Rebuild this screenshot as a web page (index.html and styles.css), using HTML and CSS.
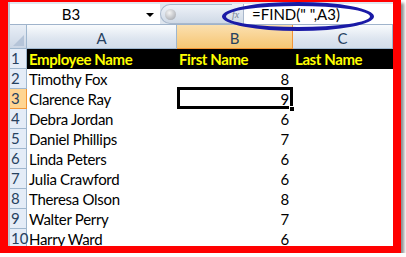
FILE: index.html
```html
<!DOCTYPE html>
<html lang="en">
<head>
  <meta charset="UTF-8">
  <title>FIND function</title>
  <link rel="stylesheet" href="styles.css">
</head>
<body>
  <div class="frame">
    <div class="sheet">
      <!-- Formula bar -->
      <div class="formula-bar">
        <div class="name-box">
          <span class="cell-ref">B3</span>
          <span class="drop-arrow"></span>
        </div>
        <div class="splitter"><span class="knob"></span></div>
        <div class="fx">fx</div>
        <div class="formula">=FIND(" ",A3)</div>
      </div>

      <!-- Grid -->
      <div class="grid">
        <div class="corner"><span class="corner-tri"></span></div>
        <div class="col-head">A</div>
        <div class="col-head active">B</div>
        <div class="col-head">C</div>

        <div class="row-head">1</div>
        <div class="cell title">Employee Name</div>
        <div class="cell title">First Name</div>
        <div class="cell title">Last Name</div>

        <div class="row-head">2</div>
        <div class="cell">Timothy Fox</div>
        <div class="cell num">8</div>
        <div class="cell"></div>

        <div class="row-head active">3</div>
        <div class="cell">Clarence Ray</div>
        <div class="cell num selected">9<span class="handle"></span></div>
        <div class="cell"></div>

        <div class="row-head">4</div>
        <div class="cell">Debra Jordan</div>
        <div class="cell num">6</div>
        <div class="cell"></div>

        <div class="row-head">5</div>
        <div class="cell">Daniel Phillips</div>
        <div class="cell num">7</div>
        <div class="cell"></div>

        <div class="row-head">6</div>
        <div class="cell">Linda Peters</div>
        <div class="cell num">6</div>
        <div class="cell"></div>

        <div class="row-head">7</div>
        <div class="cell">Julia Crawford</div>
        <div class="cell num">6</div>
        <div class="cell"></div>

        <div class="row-head">8</div>
        <div class="cell">Theresa Olson</div>
        <div class="cell num">8</div>
        <div class="cell"></div>

        <div class="row-head">9</div>
        <div class="cell">Walter Perry</div>
        <div class="cell num">7</div>
        <div class="cell"></div>

        <div class="row-head">10</div>
        <div class="cell">Harry Ward</div>
        <div class="cell num">6</div>
        <div class="cell"></div>
      </div>
    </div>

    <!-- annotation circled around the formula -->
    <div class="callout"></div>
  </div>
</body>
</html>
```

FILE: styles.css
```css
* {
  box-sizing: border-box;
  margin: 0;
  padding: 0;
}
body {
  background: #fff;
  font-family: Lato, "Open Sans", sans-serif;
  font-size: 14px;
  color: #000;
}
.frame {
  position: relative;
  width: 401px;
  height: 253px;
  border-style: solid;
  border-color: #ff0000;
  border-width: 2px 8px 7px 8px;
  box-shadow: 3px 3px 3px rgba(0, 0, 0, 0.45);
}
.sheet {
  height: 100%;
  overflow: hidden;
  border-left: 2px solid #bcc6d3;
}

/* Formula bar */
.formula-bar {
  display: flex;
  height: 23px;
  background: #dfe6ef;
  border-bottom: 1px solid #9fb3cb;
  padding-top: 2px;
}
.name-box {
  position: relative;
  width: 150px;
  background: #fff;
  display: flex;
  align-items: center;
  justify-content: center;
  font-size: 15px;
}
.cell-ref {
  margin-right: 28px;
}
.drop-arrow {
  position: absolute;
  right: 6px;
  top: 9px;
  border-left: 4px solid transparent;
  border-right: 4px solid transparent;
  border-top: 4px solid #000;
}
.splitter {
  width: 72px;
  background: linear-gradient(#eef2f8, #cfd9e6);
  border: 1px solid #a9b8cc;
  border-right: none;
  border-radius: 10px 0 0 10px;
  display: flex;
  align-items: center;
  padding-left: 4px;
}
.knob {
  width: 11px;
  height: 11px;
  border-radius: 50%;
  background: radial-gradient(circle at 40% 35%, #f4f4f4, #9a9ea6);
}
.fx {
  width: 11px;
  font-family: "Liberation Serif", serif;
  font-style: italic;
  font-size: 10px;
  color: #7b8696;
  display: flex;
  align-items: center;
  background: linear-gradient(#eef2f8, #cfd9e6);
}
.formula {
  flex: 1;
  background: #fff;
  border-left: 1px solid #a9b8cc;
  padding-left: 8px;
  display: flex;
  align-items: center;
  font-size: 15px;
}

/* Grid */
.grid {
  display: grid;
  grid-template-columns: 17px 150px 116px 100px;
  grid-template-rows: 24px repeat(10, 20px);
}
.corner {
  position: relative;
  background: linear-gradient(#e8eef6, #cbd6e5);
  border-right: 1px solid #9eb6ce;
  border-bottom: 1px solid #9eb6ce;
}
.corner-tri {
  position: absolute;
  right: 2px;
  bottom: 2px;
  border-left: 11px solid transparent;
  border-bottom: 11px solid #b5c4d8;
}
.col-head {
  background: linear-gradient(#f9fbfd, #dde5ef 60%, #d3ddea);
  border-right: 1px solid #9eb6ce;
  border-bottom: 1px solid #9eb6ce;
  color: #27415f;
  display: flex;
  align-items: center;
  justify-content: center;
  padding-top: 2px;
  font-size: 15px;
}
.col-head.active {
  background: linear-gradient(#fbe0b0, #f8d08b 60%, #f5c774);
  border-color: #f29536;
}
.row-head {
  background: #e4ecf7;
  border-right: 1px solid #9eb6ce;
  border-bottom: 1px solid #9eb6ce;
  color: #27415f;
  padding-left: 1px;
  line-height: 19px;
  font-size: 15px;
}
.row-head.active {
  background: #ffd592;
  border-color: #f29536;
}
.cell {
  padding-left: 2px;
  line-height: 20px;
  white-space: nowrap;
  font-size: 15px;
  letter-spacing: -0.3px;
}
.cell.title {
  background: #000;
  color: #ffff00;
  font-weight: bold;
  letter-spacing: -0.4px;
}
.cell.num {
  text-align: right;
  padding-right: 4px;
}
.cell.selected {
  position: relative;
}
.cell.selected::after {
  content: "";
  position: absolute;
  top: -2px;
  left: 0;
  right: 0;
  bottom: 0;
  border: 3px solid #000;
}
.handle {
  position: absolute;
  right: -2px;
  bottom: -3px;
  width: 6px;
  height: 6px;
  background: #000;
  border: 1px solid #fff;
  z-index: 1;
}

/* Blue annotation ellipse */
.callout {
  position: absolute;
  left: 214px;
  top: 0;
  width: 152px;
  height: 29px;
  border: 4px solid #1a1aa6;
  border-radius: 50%;
}
```
